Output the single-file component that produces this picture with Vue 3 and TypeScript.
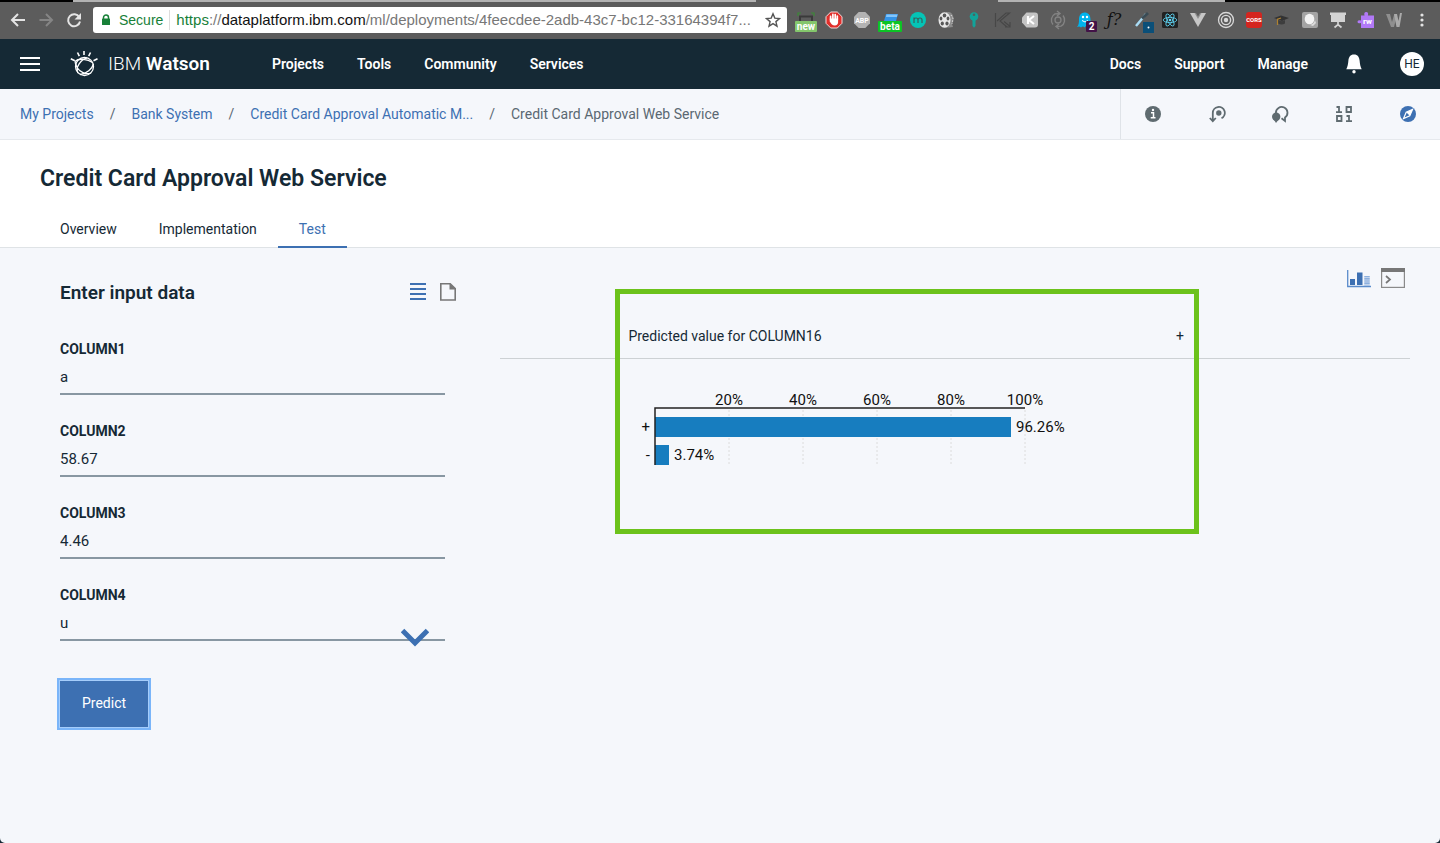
<script setup lang="ts">
import { ref } from 'vue'

interface Crumb { label: string; current?: boolean }
interface Field { id: string; label: string }

const mainNav: string[] = ['Projects', 'Tools', 'Community', 'Services']
const sideNav: string[] = ['Docs', 'Support', 'Manage']
const crumbs: Crumb[] = [
  { label: 'My Projects' },
  { label: 'Bank System' },
  { label: 'Credit Card Approval Automatic M...' },
  { label: 'Credit Card Approval Web Service', current: true },
]
const tabs: string[] = ['Overview', 'Implementation', 'Test']
const activeTab = ref('Test')

const fields: Field[] = [
  { id: 'column1', label: 'COLUMN1' },
  { id: 'column2', label: 'COLUMN2' },
  { id: 'column3', label: 'COLUMN3' },
]
const values = ref<Record<string, string>>({ column1: 'a', column2: '58.67', column3: '4.46' })
const column4 = ref('u')

const axisWidth = 370
const axisLeft = 20
const ticks: number[] = [20, 40, 60, 80, 100]
const bars = [
  { name: '+', value: 96.26 },
  { name: '-', value: 3.74 },
]
const scale = (v: number): number => Math.round((v / 100) * axisWidth)
</script>

<template>
  <div class="page">
    <div class="browser">
      <div class="tabstrip"><i class="tab-first"></i><i class="tab-active"></i><i class="tab-last"></i></div>
      <div class="toolbar">
        <button class="tool" aria-label="Back">
          <svg width="28" height="32" viewBox="0 0 28 32"><path d="M21 16H8.500M14 10l-6 6 6 6" fill="none" stroke="#e4e4e4" stroke-width="2" /></svg>
        </button>
        <button class="tool" aria-label="Forward">
          <svg width="28" height="32" viewBox="0 0 28 32"><path d="M7.500 16H20M14 10l6 6-6 6" fill="none" stroke="#858585" stroke-width="2" /></svg>
        </button>
        <button class="tool" aria-label="Reload">
          <svg width="28" height="32" viewBox="0 0 28 32"><path d="M19.300 13.200A6 6 0 1 0 20 17.500" fill="none" stroke="#e4e4e4" stroke-width="2" /><path d="M21 9v6.500h-6.500z" fill="#e4e4e4" /></svg>
        </button>
        <div class="address">
          <svg class="lock" width="10" height="12" viewBox="0 0 10 12"><path d="M2.500 5V3.500a2.500 2.500 0 0 1 5 0V5" fill="none" stroke="#188038" stroke-width="1.500" /><rect x="1" y="4.500" width="8" height="6.500" rx=".6" fill="#188038" /></svg>
          <span class="secure">Secure</span>
          <span class="url"><span class="scheme">https</span>://<span class="host">dataplatform.ibm.com</span>/ml/deployments/4feecdee-2adb-43c7-bc12-33164394f7...</span>
          <svg class="star" width="16" height="16" viewBox="0 0 16 16"><path d="M8 1.800l1.800 4.300 4.700.4-3.600 3.100 1.100 4.600L8 11.700l-4 2.500 1.100-4.600L1.500 6.500l4.700-.4z" fill="none" stroke="#555" stroke-width="1.400" /></svg>
        </div>
        <div class="extensions">
          <svg viewBox="0 0 28 32"><path d="M6 12V9h3M22 12V9h-3" fill="none" stroke="#3b8a35" stroke-width="1.200" /><path d="M8 17v-4.500h12V17" fill="none" stroke="#3a3a3a" stroke-width="2" /><rect x="3" y="17" width="22" height="11" rx="1" fill="#84c66c" /><text x="14" y="26" class="badge">new</text></svg>
          <svg viewBox="0 0 28 32"><path d="M10.700 8h6.600l4.700 4.700v6.600L17.300 24h-6.600L6 19.300v-6.600z" fill="#e12f2b" stroke="#f3dada" stroke-width="1" /><path d="M10.600 16v-3.600M12.900 15v-4.600M15.200 15v-4.400M17.300 15.500v-3.300" stroke="#fff" stroke-width="1.700" stroke-linecap="round" /><path d="M9.800 14.500h8.300v3.800c0 2-1.200 3.200-3.300 3.200-2.500 0-3.500-1.200-5-4z" fill="#fff" /></svg>
          <svg viewBox="0 0 28 32"><path d="M10.700 8h6.600l4.700 4.700v6.600L17.300 24h-6.600L6 19.300v-6.600z" fill="#b3b3b3" /><text x="14" y="18.700" class="abp">ABP</text></svg>
          <svg viewBox="0 0 28 32"><path d="M10 10h12l-2 7H8z" fill="#3494e8" /><path d="M10.500 10.500h11l-.6 2.500H10z" fill="#84c5fa" /><rect x="2" y="17" width="24" height="11" rx="1" fill="#0cc425" /><text x="14" y="26.300" class="badge">beta</text></svg>
          <svg viewBox="0 0 28 32"><circle cx="14" cy="16" r="8" fill="#04c4b6" /><path d="M10 19v-5.500M10 16q0-2 2-2t2 2v3m0-3q0-2 2-2t2 2v3" fill="none" stroke="#37605d" stroke-width="1.200" /></svg>
          <svg viewBox="0 0 28 32"><path d="M14 8h3a5 7 0 0 1 3 12l1 3-4 .5h-4z" fill="#8c8c8c" /><ellipse cx="12.500" cy="16" rx="6" ry="7.700" fill="#e8e8e8" /><g fill="#575757"><ellipse cx="12.500" cy="11.500" rx="1.800" ry="1.900" /><ellipse cx="9" cy="14.500" rx="1.400" ry="1.900" /><ellipse cx="16" cy="14.500" rx="1.400" ry="1.900" /><ellipse cx="10.300" cy="19.500" rx="1.600" ry="1.900" /><ellipse cx="15" cy="19.500" rx="1.600" ry="1.900" /></g><path d="M19 11l2 3-1 6" fill="none" stroke="#ddd" stroke-dasharray="1.500" /></svg>
          <svg viewBox="0 0 28 32"><circle cx="14" cy="12.500" r="4.300" fill="#12a39a" /><path d="M12.500 15h3v7L14 23.700 12.500 22z" fill="#12a39a" /><circle cx="14" cy="10.700" r="1.300" fill="#4b6361" /></svg>
          <svg viewBox="0 0 28 32"><path d="M7.500 9v14M9 17l9-8h3.500L12 17l7 6M16 17.500l5.500 4.500M22 18v5h-5" fill="none" stroke="#474747" stroke-width="1.200" /></svg>
          <svg viewBox="0 0 28 32"><path d="M10.500 8.500h8.500q3 0 3 3v9q0 3-3 3h-8.500L6 18.500v-5z" fill="#c4c4c4" /><path d="M12 12v8M18 12l-5 4 5 4" fill="none" stroke="#fff" stroke-width="2.200" /></svg>
          <svg viewBox="0 0 28 32"><path d="M9 20.500a7 7 0 0 1 2-10.600l4-.4M19 11.500a7 7 0 0 1-2 10.600l-4 .4M13 7l3 2.500-3 2.500M15 20l-3 2.500 3 2.500" fill="none" stroke="#838383" stroke-width="1.400" /><circle cx="14" cy="16" r="3" fill="none" stroke="#838383" stroke-width="1.300" /></svg>
          <svg viewBox="0 0 28 32"><path d="M7 15.500c0-4 2-7 5.500-7s6 2.500 6 7c0 3 .5 5 1 7.500-2-1-2.500-1-3.500.3-1.500-1.500-2.500-1.500-3.500.2-1-1.500-2-1.500-3.500 0-1.500-1.500-2.500-1-4-.5 1.800-2 2-4.500 2-7.500z" fill="#00b3ed" /><circle cx="11" cy="13" r="1.200" fill="#fff" /><circle cx="15" cy="13" r="1.200" fill="#fff" /><path d="M10 16.500q3 3 6 0" fill="none" stroke="#fff" /><rect x="14" y="17" width="11" height="11" rx="1" fill="#421247" /><text x="19.500" y="26.200" class="badge">2</text></svg>
          <svg viewBox="0 0 28 32"><text x="14" y="21" class="fn">ƒ?</text></svg>
          <svg viewBox="0 0 28 32"><path d="M8 22L18 10" stroke="#a9dcf5" stroke-width="2.500" /><path d="M14 14.500L20 9" stroke="#3a4b54" stroke-width="3" /><rect x="15" y="18" width="11" height="11" fill="#0b4f78" /><circle cx="20.500" cy="23.500" r="1" fill="#fff" /></svg>
          <svg viewBox="0 0 28 32"><rect x="6" y="8" width="16" height="16" rx="1.500" fill="#222" /><g fill="none" stroke="#61dafb" stroke-width=".8"><ellipse cx="14" cy="16" rx="6.800" ry="2.600" /><ellipse cx="14" cy="16" rx="6.800" ry="2.600" transform="rotate(60 14 16)" /><ellipse cx="14" cy="16" rx="6.800" ry="2.600" transform="rotate(120 14 16)" /></g><circle cx="14" cy="16" r="1.300" fill="#61dafb" /></svg>
          <svg viewBox="0 0 28 32"><path d="M6 9h16l-8 14z" fill="#c7c7c7" /><path d="M10.500 9h7L14 15z" fill="#8e8e8e" /><path d="M12 9h4l-2 3.500z" fill="#5c5c5c" /></svg>
          <svg viewBox="0 0 28 32"><g fill="none" stroke="#d8d8d8"><circle cx="14" cy="16" r="7.500" stroke-width="1.300" /><circle cx="14" cy="16" r="4.600" stroke-width="1.400" /></g><circle cx="14" cy="16" r="2.200" fill="#d8d8d8" /></svg>
          <svg viewBox="0 0 28 32"><rect x="6" y="8" width="16" height="16" rx="3" fill="#d4251f" /><text x="14" y="18.300" class="cors">CORS</text></svg>
          <svg viewBox="0 0 28 32"><path d="M6 14l7-2.500 8 2.500-7 3z" fill="#333" /><path d="M10 16v3.500q4 2 7 0V16l-3 1.200z" fill="#3d3d3d" /><path d="M13 14l-3.500 1.200V21" fill="none" stroke="#b0822f" stroke-width="1.200" /></svg>
          <svg viewBox="0 0 28 32"><rect x="6" y="8" width="16" height="16" rx="2" fill="#a4a4a4" /><ellipse cx="13.500" cy="15" rx="4.800" ry="5.300" fill="#f3f3f3" /><path d="M14 21q4-1 5-5l1 3-3 3z" fill="#ddd" /></svg>
          <svg viewBox="0 0 28 32"><path d="M6 8.500h16v2.500h-1v7H7v-7H6z" fill="#d3d3d3" /><path d="M14 18v4M10.500 23.500l3.500-3 3.500 3" fill="none" stroke="#d3d3d3" stroke-width="1.700" /></svg>
          <svg viewBox="0 0 28 32"><path d="M9 11.500h3.500q-1-3.500 1.700-3.500t1.700 3.500H22V24H9v-5q-3.500 1-3.500-1.300T9 16.500z" fill="#b179f7" /><text x="15.500" y="20" class="rw">rw</text></svg>
          <svg viewBox="0 0 28 32"><path d="M6 10h4l2 8 2-7h3l-3 12h-3z" fill="#8f8f8f" /><path d="M14 10h3l1.500 7L20 9h2l-2.500 14h-3z" fill="#aaa" /></svg>
          <svg viewBox="0 0 28 32"><g fill="#e4e4e4"><circle cx="14" cy="11" r="1.600" /><circle cx="14" cy="16" r="1.600" /><circle cx="14" cy="21" r="1.600" /></g></svg>
        </div>
      </div>
    </div>

    <header class="header">
      <button class="menu" aria-label="Menu"><svg width="20" height="16" viewBox="0 0 20 16"><path d="M0 2h20M0 8h20M0 14h20" stroke="#fff" stroke-width="2" /></svg></button>
      <a class="brand" href="#">
        <svg width="28" height="28" viewBox="0 0 28 28"><g fill="none" stroke="#fff" stroke-width="1.300"><circle cx="14.500" cy="16.500" r="9" /><path d="M5 11.500C9 7.500 18 9.500 22.500 12.500M8 23C5 17 11 9.500 17 7.800M21 23C12 26 6 18 5 11.500M10 24.500C17 23.500 22 19 23.500 14" /><path d="M14 1v4M7.500 2.500l1.800 3.700M20.500 2.500l-1.800 3.700M.8 8.700l4 2M27.500 8.700l-4 2" stroke-width="1.600" /></g></svg>
        <span>IBM <b>Watson</b></span>
      </a>
      <nav class="nav main-nav"><a v-for="item in mainNav" :key="item" href="#">{{ item }}</a></nav>
      <nav class="nav side-nav"><a v-for="item in sideNav" :key="item" href="#">{{ item }}</a></nav>
      <button class="bell" aria-label="Notifications"><svg width="16" height="20" viewBox="0 0 16 20"><path d="M8 .5c3.800 0 5.300 2.700 5.600 6 .3 3.700.8 6.200 2.100 8.800H.3C1.600 12.700 2.100 10.200 2.400 6.500 2.700 3.200 4.200.5 8 .5z" fill="#fff" /><circle cx="8" cy="17.700" r="1.700" fill="#fff" /></svg></button>
      <button class="avatar">HE</button>
    </header>

    <div class="crumbbar">
      <nav class="crumbs" aria-label="Breadcrumb">
        <template v-for="(crumb, i) in crumbs" :key="crumb.label">
          <span v-if="i" class="slash">/</span>
          <span v-if="crumb.current" class="current">{{ crumb.label }}</span>
          <a v-else href="#">{{ crumb.label }}</a>
        </template>
      </nav>
      <div class="actions">
        <button aria-label="Information"><svg width="18" height="18" viewBox="0 0 18 18"><circle cx="9" cy="9" r="8" fill="#5f6b70" /><path d="M7 7.800h2.500v4.700M6.700 12.700h4.800" fill="none" stroke="#fff" stroke-width="1.500" /><circle cx="9" cy="5" r="1.200" fill="#fff" /></svg></button>
        <button aria-label="Lineage"><svg width="18" height="18" viewBox="0 0 18 18"><path d="M4.800 16V8a6 6 0 1 1 8.700 5.300M1.800 13l3 3.200 3-3.200" fill="none" stroke="#5f6b70" stroke-width="1.800" /><circle cx="10.800" cy="8" r="2.700" fill="#5f6b70" /></svg></button>
        <button aria-label="Comments"><svg width="18" height="18" viewBox="0 0 18 18"><path d="M4.900 8A5.800 5.800 0 1 1 14 12.500V16l-3.500-2.700" fill="none" stroke="#5f6b70" stroke-width="1.800" /><circle cx="5.200" cy="11.800" r="4.200" fill="#5f6b70" /><path d="M2.500 14h5.500l-3 4z" fill="#5f6b70" /></svg></button>
        <button aria-label="Data"><svg width="18" height="18" viewBox="0 0 18 18"><g fill="none" stroke="#5f6b70" stroke-width="1.800"><path d="M1.500 2H4v5M1 7.200h6M11.500 2H16v5h-4.500zM2 11h4.500v5H2zM11.500 11H14v5M11 16.200h6" /></g></svg></button>
        <button aria-label="Explore"><svg width="18" height="18" viewBox="0 0 18 18"><circle cx="9" cy="9" r="8" fill="#3d70b2" /><path d="M13.500 4.500l-2.700 6.300-6.300 2.700 2.700-6.300z" fill="none" stroke="#fff" stroke-width="1.200" /><path d="M13.500 4.500l-2.700 6.300-3.600-3.600z" fill="#fff" /></svg></button>
      </div>
    </div>

    <section class="title">
      <h1>Credit Card Approval Web Service</h1>
      <nav class="tabs">
        <button v-for="tab in tabs" :key="tab" :class="{ active: tab === activeTab }" @click="activeTab = tab">{{ tab }}</button>
      </nav>
    </section>

    <main class="content">
      <form class="inputs" @submit.prevent>
        <div class="inputs-head">
          <h2>Enter input data</h2>
          <button type="button" aria-label="Form view"><svg width="18" height="20" viewBox="0 0 18 20"><path d="M1 2h16M1 7h16M1 12h16M1 17h16" stroke="#3d70b2" stroke-width="2" /></svg></button>
          <button type="button" aria-label="JSON view"><svg width="18" height="20" viewBox="0 0 18 20"><path d="M1.800 1.700h9.400l5 5V18H1.800z" fill="none" stroke="#777" stroke-width="1.600" /><path d="M10.500 1v6.500H17z" fill="#777" /></svg></button>
        </div>
        <div v-for="field in fields" :key="field.id" class="field">
          <label :for="field.id">{{ field.label }}</label>
          <input :id="field.id" v-model="values[field.id]" type="text" />
        </div>
        <div class="field">
          <label for="column4">COLUMN4</label>
          <select id="column4" v-model="column4"><option>u</option><option>y</option><option>l</option></select>
          <svg class="chevron" width="28" height="19" viewBox="0 0 28 19"><path d="M1.500 2.500L14 15 26.500 2.500" fill="none" stroke="#3d70b2" stroke-width="5" /></svg>
        </div>
        <button class="predict" type="submit">Predict</button>
      </form>

      <section class="results">
        <div class="views">
          <button aria-label="Chart view"><svg width="24" height="20" viewBox="0 0 24 20"><path d="M.7 2v16.500H24" fill="none" stroke="#5a8bcb" stroke-width="1.300" /><path d="M3 11h5v6H3zM10 4.500h5.500V17H10z" fill="#3d70b2" /><path d="M20 8v9.500" stroke="#8db0de" stroke-width="5.500" stroke-dasharray="1.600 .5" /></svg></button>
          <button aria-label="Raw output"><svg width="24" height="20" viewBox="0 0 24 20"><rect x=".6" y=".6" width="22.800" height="18.800" fill="none" stroke="#8a8a8a" stroke-width="1.200" /><path d="M0 0h24v4H0z" fill="#777" /><path d="M5 8l4 3.500L5 15" fill="none" stroke="#777" stroke-width="1.700" /></svg></button>
        </div>
        <table>
          <tbody><tr><th scope="row">Predicted value for COLUMN16</th><td>+</td></tr></tbody>
        </table>
        <svg class="chart" width="640" height="90" viewBox="0 0 640 90" role="img" aria-label="Prediction probabilities">
          <g v-for="t in ticks" :key="t">
            <line :x1="axisLeft + scale(t)" :x2="axisLeft + scale(t)" y1="21" y2="75" class="grid" />
            <text :x="axisLeft + scale(t)" y="16" text-anchor="middle">{{ t }}%</text>
          </g>
          <g v-for="(bar, i) in bars" :key="bar.name">
            <rect :x="axisLeft" :y="28 + i * 28" :width="scale(bar.value)" height="20" fill="#177dbf" />
            <text :x="axisLeft - 5" :y="43 + i * 28" text-anchor="end">{{ bar.name }}</text>
            <text :x="axisLeft + scale(bar.value) + 5" :y="43 + i * 28">{{ bar.value }}%</text>
          </g>
          <path :d="`M${axisLeft} 76V19H${axisLeft + axisWidth}`" class="axis" />
        </svg>
        <div class="highlight"></div>
      </section>
    </main>
  </div>
</template>

<style>
body {
  margin: 0;
  background: #152935;
}
</style>

<style scoped>
.page {
  min-height: 100vh;
  display: flex;
  flex-direction: column;
  border-radius: 0 0 5px 5px;
  background: #f5f7fb;
  color: #152935;
  font: 14px/20px Roboto, "Liberation Sans", sans-serif;
}
* { box-sizing: border-box; }
button {
  padding: 0;
  border: 0;
  background: none;
  color: inherit;
  font: inherit;
  cursor: pointer;
}
a { color: inherit; text-decoration: none; }
svg { display: block; flex: none; }

.browser { background: #5c5c5c; }
.tabstrip { display: flex; height: 2px; background: #000; }
.tab-first { margin-left: 73px; width: 683px; background: #b3b3b3; }
.tab-active { width: 242px; background: #5c5c5c; }
.tab-last { width: 227px; background: #b3b3b3; }
.toolbar { display: flex; align-items: center; height: 37px; padding: 0 4px 1px; }
.address {
  display: flex;
  flex: 1;
  align-items: center;
  height: 26px;
  margin: 0 5px;
  padding: 0 6px 0 8px;
  border-radius: 3px;
  background: #fff;
  color: #777;
  font-family: "Liberation Sans", sans-serif;
  white-space: nowrap;
}
.secure { margin-left: 8px; padding-right: 6px; border-right: 1px solid #ddd; color: #188038; }
.url { flex: 1; width: 0; margin-left: 6px; font-size: 15px; }
.scheme { color: #188038; }
.host { color: #111; }
.extensions { display: flex; }
.extensions svg { width: 28px; height: 32px; }
.badge { fill: #fff; font-size: 10px; font-weight: 700; text-anchor: middle; }
.abp { fill: #fff; font-size: 7px; font-weight: 700; text-anchor: middle; }
.cors { fill: #fff; font-size: 6px; font-weight: 700; text-anchor: middle; }
.rw { fill: #fff; font-size: 8px; font-weight: 700; text-anchor: middle; }
.fn { fill: #111; font: italic 400 16px "DejaVu Serif", serif; text-anchor: middle; }

.header {
  display: flex;
  align-items: center;
  height: 50px;
  padding: 0 16px 0 20px;
  background: #152935;
  color: #fff;
}
.brand {
  display: flex;
  align-items: center;
  gap: 10px;
  width: 202px;
  margin-left: 30px;
  font-size: 19px;
  font-weight: 300;
}
.brand b { font-weight: 600; }
.nav { display: flex; gap: 33px; font-weight: 600; }
.side-nav { margin-left: auto; }
.bell { margin-left: 38px; }
.avatar {
  width: 24px;
  height: 24px;
  margin-left: 38px;
  border-radius: 50%;
  background: #fff;
  color: #152935;
  font-size: 12px;
}

.crumbbar {
  display: flex;
  height: 51px;
  border-bottom: 1px solid #e6e9ed;
}
.crumbs { display: flex; flex: 1; align-items: center; gap: 16px; padding-left: 20px; color: #5a6872; }
.crumbs a { color: #3d70b2; }
.actions { display: flex; width: 320px; border-left: 1px solid #dfe3e8; }
.actions button { display: flex; flex: 1; align-items: center; justify-content: center; }

.title { background: #fff; border-bottom: 1px solid #dfe3e6; }
h1 { margin: 0; padding: 25px 40px 0; font-size: 23px; line-height: 28px; font-weight: 600; }
.tabs { display: flex; height: 38px; margin: 17px 0 -1px 39px; }
.tabs button { padding: 2px 21px 0; border-bottom: 2px solid transparent; }
.tabs .active { border-color: #3d70b2; color: #3d70b2; }

.content { display: flex; flex: 1; padding: 20px 30px 20px 60px; }
.inputs { width: 397px; margin-right: 43px; }
.inputs-head { display: flex; gap: 12px; align-items: center; height: 48px; }
h2 { flex: 1; margin: 0; padding-top: 2px; font-size: 19px; line-height: 24px; font-weight: 600; }
.field { position: relative; display: flex; flex-direction: column; width: 385px; margin: 23px 0 26px; }
.field + .field { margin-top: 0; }
.field label { font-weight: 700; }
.field input, .field select {
  height: 36px;
  padding: 2px 0 0;
  border: 0;
  border-bottom: 2px solid #8897a2;
  border-radius: 0;
  outline: 0;
  background: transparent;
  color: #152935;
  font: inherit;
  font-size: 15px;
  appearance: none;
}
.chevron { position: absolute; right: 16px; bottom: -6px; pointer-events: none; }
.predict {
  height: 46px;
  margin-top: 14px;
  padding: 0 22px 2px;
  background: #3d70b2;
  box-shadow: 0 0 0 1px #a5cdfb, 0 0 0 3px #7ab5f9;
  color: #fff;
}

.results { position: relative; flex: 1; }
.views { display: flex; justify-content: flex-end; gap: 10px; padding-right: 5px; }
table { width: 100%; margin-top: 27px; border-collapse: collapse; table-layout: fixed; border-bottom: 1px solid #cdd1d4; }
th, td { padding: 11px 5px 12px 0; font-weight: 400; text-align: center; }
.chart { margin: 30px auto 0; overflow: visible; }
.chart text { fill: #111; font-size: 15px; }
.grid { stroke: #dcdcdc; stroke-dasharray: 2 2; }
.axis { fill: none; stroke: #222; stroke-width: 1.500; }
.highlight {
  position: absolute;
  top: 21px;
  left: 115px;
  width: 584px;
  height: 245px;
  border: 5px solid #6cc21b;
  pointer-events: none;
}
</style>
